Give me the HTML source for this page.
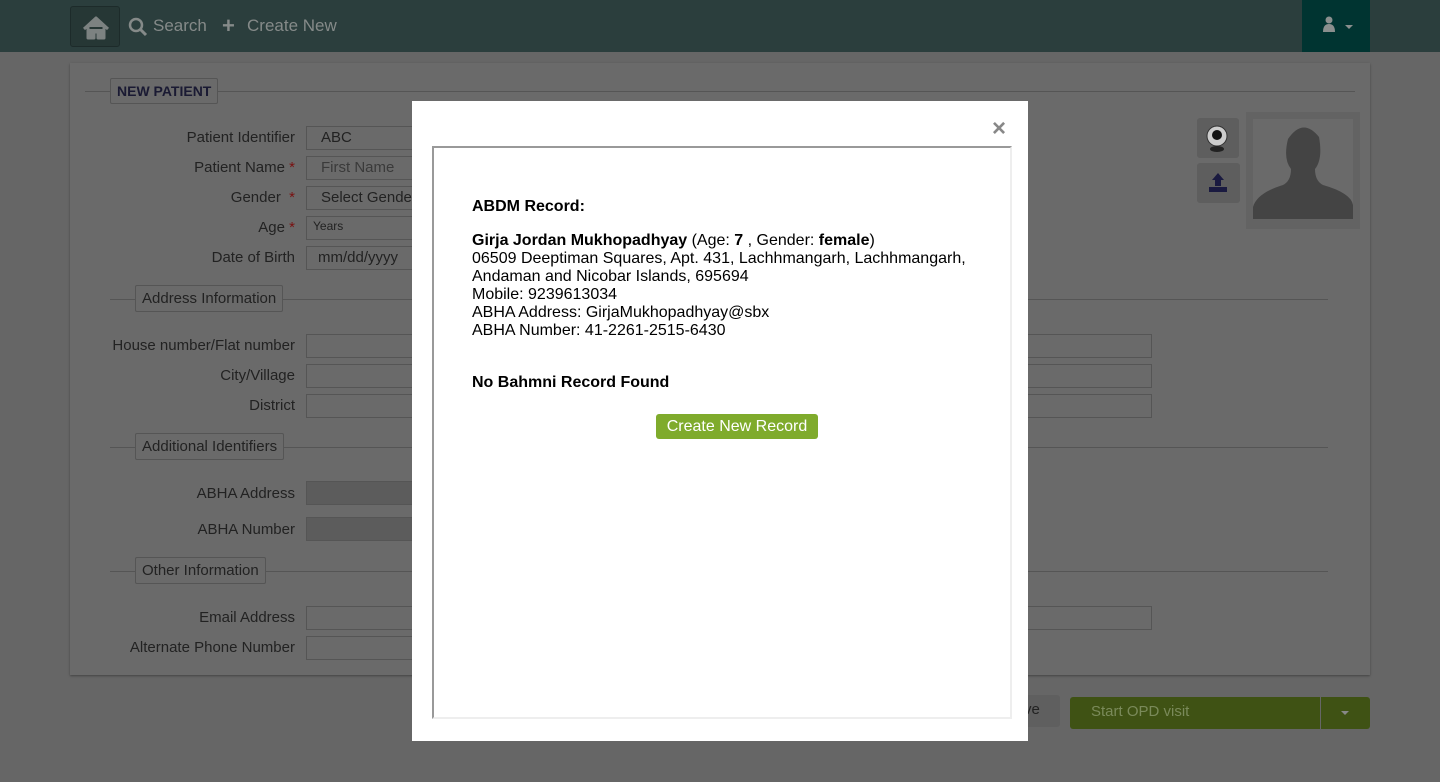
<!DOCTYPE html>
<html><head><style>
*{box-sizing:border-box;margin:0;padding:0}
body{width:1440px;height:782px;overflow:hidden;background:#666;font-family:"Liberation Sans",sans-serif;position:relative}
.nav{position:absolute;left:0;top:0;width:1440px;height:52px;background:#2b3e3d}
.home{position:absolute;left:70px;top:6px;width:50px;height:41px;border:1px solid #1d2b2a;border-radius:3px;background:#263735}
.navt{position:absolute;top:16px;color:#858a89;font-size:17px}
.user{position:absolute;left:1302px;top:0;width:68px;height:52px;background:#003431}
.panel{position:absolute;left:70px;top:63px;width:1300px;height:612px;background:#6a6a6a;box-shadow:0 1px 2px #444}
.a{position:absolute}
.line{position:absolute;height:1px;background:#555}
.leg{position:absolute;border:1px solid #555;background:#6a6a6a;border-radius:2px;color:#222;font-size:15px;padding:4px 6px;white-space:nowrap}
.lab{position:absolute;right:1145px;font-size:15px;color:#222;text-align:right;white-space:nowrap}
.req{color:#7a1010}
.in{position:absolute;left:306px;height:24px;border:1px solid #555;background:#6a6a6a;font-size:15px;color:#222;padding:2px 14px;white-space:nowrap;overflow:hidden}
.modal{position:absolute;left:412px;top:101px;width:616px;height:640px;background:#fff}
.frame{position:absolute;left:20px;top:45px;width:580px;height:573px;border:2px solid #999;border-right:2px solid #eee;border-bottom:2px solid #eee}
.mt{position:absolute;left:60px;font-size:16px;color:#000;line-height:18px;white-space:nowrap}
</style></head><body>
<div class="nav">
 <div class="home"><svg width="50" height="41" viewBox="0 0 50 41"><path d="M13 22 L25 11 L37 22 M17 20 V31 H23 V25 H27 V31 H33 V20" fill="#7c8281" stroke="#7c8281" stroke-width="3" stroke-linejoin="round"/></svg></div>
 <svg class="a" style="left:128px;top:17px" width="20" height="20"><circle cx="8" cy="8" r="6" fill="none" stroke="#858a89" stroke-width="2.5"/><path d="M12 12 L18 18" stroke="#858a89" stroke-width="3"/></svg>
 <div class="navt" style="left:153px">Search</div>
 <div class="navt" style="left:222px;top:13px;font-size:22px;font-weight:bold">+</div>
 <div class="navt" style="left:247px">Create New</div>
 <div class="user"><svg class="a" style="left:20px;top:16px" width="40" height="20"><circle cx="7" cy="4" r="3.5" fill="#8a8f8e"/><path d="M1 16 Q1 8 7 8 Q13 8 13 16 Z" fill="#8a8f8e"/><path d="M23 9 L31 9 L27 13 Z" fill="#8a8f8e"/></svg></div>
</div>
<div class="panel"></div>
<div class="line" style="left:85px;top:91px;width:1270px"></div>
<div class="leg" style="left:110px;top:78px;font-weight:bold;color:#1a1a33;font-size:14px">NEW PATIENT</div>
<div class="lab" style="top:129px">Patient Identifier</div>
<div class="lab" style="top:159px">Patient Name <span class="req">*</span></div>
<div class="lab" style="top:189px">Gender &nbsp;<span class="req">*</span></div>
<div class="lab" style="top:219px">Age <span class="req">*</span></div>
<div class="lab" style="top:249px">Date of Birth</div>
<div class="in" style="top:126px;width:110px">ABC</div>
<div class="in" style="top:156px;width:110px;color:#3a3a3a">First Name</div>
<div class="in" style="top:186px;width:110px">Select Gender</div>
<div class="in" style="top:216px;width:110px;padding:2px 6px;font-size:12px">Years</div>
<div class="in" style="top:246px;width:110px;padding:2px 11px">mm/dd/yyyy</div>
<div class="a" style="left:1197px;top:118px;width:42px;height:40px;background:#5e5e5e;border-radius:3px"><svg width="42" height="40"><circle cx="20" cy="18" r="10" fill="#ccc" stroke="#333"/><circle cx="20" cy="17" r="5" fill="#111"/><ellipse cx="20" cy="31" rx="7" ry="3" fill="#222"/></svg></div>
<div class="a" style="left:1197px;top:163px;width:43px;height:40px;background:#5e5e5e;border-radius:3px"><svg width="43" height="40"><path d="M21 10 L27 17 H24 V23 H18 V17 H15 Z M12 24 H30 V29 H12 Z" fill="#1a1a40"/></svg></div>
<div class="a" style="left:1246px;top:112px;width:114px;height:117px;background:#636363"><div class="a" style="left:7px;top:7px;width:100px;height:100px;background:#6a6a6a;overflow:hidden"><svg width="100" height="100"><path d="M35 20 Q50 -2 66 18 Q70 40 62 50 Q62 62 70 66 Q98 74 100 86 V100 H0 V88 Q4 74 30 66 Q38 62 38 50 Q30 40 35 20Z" fill="#444"/></svg></div></div>
<div class="line" style="left:110px;top:299px;width:1218px"></div>
<div class="leg" style="left:135px;top:285px">Address Information</div>
<div class="lab" style="top:337px">House number/Flat number</div>
<div class="lab" style="top:367px">City/Village</div>
<div class="lab" style="top:397px">District</div>
<div class="in" style="top:334px;width:846px"></div>
<div class="in" style="top:364px;width:846px"></div>
<div class="in" style="top:394px;width:846px"></div>
<div class="line" style="left:110px;top:447px;width:1218px"></div>
<div class="leg" style="left:135px;top:433px">Additional Identifiers</div>
<div class="lab" style="top:485px">ABHA Address</div>
<div class="lab" style="top:521px">ABHA Number</div>
<div class="in" style="top:481px;width:110px;background:#5c5c5c"></div>
<div class="in" style="top:517px;width:110px;background:#5c5c5c"></div>
<div class="line" style="left:110px;top:571px;width:1218px"></div>
<div class="leg" style="left:135px;top:557px">Other Information</div>
<div class="lab" style="top:609px">Email Address</div>
<div class="lab" style="top:639px">Alternate Phone Number</div>
<div class="in" style="top:606px;width:846px"></div>
<div class="in" style="top:636px;width:110px"></div>
<div class="a" style="left:1000px;top:695px;width:60px;height:32px;background:#5f5f5f;border-radius:3px;font-size:15px;color:#222;padding:6px 0 0 24px">ve</div>
<div class="a" style="left:1070px;top:697px;width:250px;height:32px;background:#3f5214;border-radius:3px 0 0 3px;color:#7a8a5a;font-size:15px;padding:6px 0 0 21px">Start OPD visit</div>
<div class="a" style="left:1321px;top:697px;width:49px;height:32px;background:#3f5214;border-radius:0 3px 3px 0"><svg width="49" height="32"><path d="M20 14 L28 14 L24 18 Z" fill="#888"/></svg></div>
<div class="modal">
 <div class="a" style="left:580px;top:14px;font-size:24px;font-weight:bold;color:#888">×</div>
 <div class="frame"></div>
 <div class="mt" style="top:97px;font-weight:bold">ABDM Record:</div>
 <div class="mt" style="top:131px"><b>Girja Jordan Mukhopadhyay</b> (Age: <b>7</b> , Gender: <b>female</b>)<br>06509 Deeptiman Squares, Apt. 431, Lachhmangarh, Lachhmangarh,<br>Andaman and Nicobar Islands, 695694<br>Mobile: 9239613034<br>ABHA Address: GirjaMukhopadhyay@sbx<br>ABHA Number: 41-2261-2515-6430</div>
 <div class="mt" style="top:273px;font-weight:bold">No Bahmni Record Found</div>
 <div class="a" style="left:244px;top:313px;width:162px;height:25px;background:#7fab2c;border-radius:3px;color:#fff;font-size:16px;text-align:center;line-height:25px">Create New Record</div>
</div>
</body></html>
